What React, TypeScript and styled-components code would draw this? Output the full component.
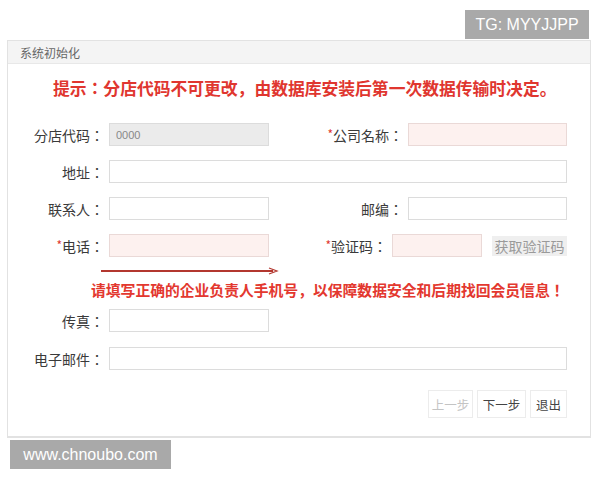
import React from "react";
import styled, { createGlobalStyle } from "styled-components";

const GlobalStyle = createGlobalStyle`
  html, body {
    margin: 0;
    padding: 0;
    background: #ffffff;
  }
  body {
    font-family: "Noto Sans CJK SC", "Noto Sans", sans-serif;
    width: 600px;
    height: 480px;
    overflow: hidden;
  }
`;

// centred full-width punctuation, as in the form's labels and messages
const cjkCentered = `"Noto Sans CJK JP", "Noto Sans CJK SC", sans-serif`;

const Page = styled.div`
  position: relative;
  width: 600px;
  height: 480px;
  padding: 40px 0 0 7px;
  box-sizing: border-box;
`;

const Panel = styled.div`
  width: 584px;
  height: 398px;
  box-sizing: border-box;
  border: 1px solid #e2e2e2;
  border-bottom-width: 2px;
  background: #fff;
  display: flex;
  flex-direction: column;
`;

const Header = styled.div`
  height: 23px;
  box-sizing: border-box;
  background: #f4f4f4;
  border-bottom: 1px solid #e8e8e8;
  padding-left: 12px;
  display: flex;
  align-items: center;
  font-size: 12px;
  color: #666;
`;

const Tip = styled.div`
  height: 48px;
  line-height: 48px;
  padding-left: 45px;
  font-family: ${cjkCentered};
  font-size: 16.8px;
  font-weight: 700;
  color: #e0362f;
  white-space: nowrap;
`;

const Form = styled.div`
  display: flex;
  flex-direction: column;
  padding-top: 11px;
`;

const Row = styled.div<{ $gap?: number }>`
  display: flex;
  align-items: center;
  height: 23px;
  margin-top: ${(p) => p.$gap ?? 14}px;
  &:first-child {
    margin-top: 0;
  }
`;

const Label = styled.label<{ $w: number }>`
  width: ${(p) => p.$w}px;
  margin-right: 5px;
  text-align: right;
  font-family: ${cjkCentered};
  font-size: 14px;
  color: #3a3a3a;
  white-space: nowrap;
`;

const Star = styled.span`
  color: #e0362f;
  font-size: 12px;
  vertical-align: 2px;
`;

type Tone = "plain" | "gray" | "pink";

const Input = styled.input<{ $w: number; $tone?: Tone }>`
  width: ${(p) => p.$w}px;
  height: 23px;
  box-sizing: border-box;
  border: 1px solid ${(p) => (p.$tone === "pink" ? "#ead9d7" : "#dcdcdc")};
  background: ${(p) =>
    p.$tone === "gray" ? "#ebebeb" : p.$tone === "pink" ? "#fdf1ef" : "#fff"};
  padding: 0 6px;
  font-family: "Liberation Sans", "Noto Sans CJK SC", sans-serif;
  font-size: 11px;
  color: #888;
  outline: none;
`;

const CodeButton = styled.button`
  margin-left: 10px;
  width: 75px;
  height: 20px;
  border: none;
  background: #efefef;
  color: #9a9a9a;
  font-family: "Noto Sans CJK SC", sans-serif;
  font-size: 14px;
  padding: 0;
  line-height: 20px;
`;

const Notice = styled.div`
  display: flex;
  flex-direction: column;
  height: 52px;
`;

const Underline = styled.svg`
  display: block;
  margin: 10px 0 0 93px;
`;

const NoticeText = styled.div`
  margin-top: 5px;
  padding-left: 83px;
  font-family: ${cjkCentered};
  font-size: 14.8px;
  line-height: 20px;
  font-weight: 700;
  color: #e3382f;
  white-space: nowrap;
`;

const Actions = styled.div`
  display: flex;
  justify-content: flex-end;
  gap: 4px;
  margin-top: 20px;
  padding-right: 23px;
`;

const StepButton = styled.button<{ $disabled?: boolean; $w: number }>`
  width: ${(p) => p.$w}px;
  height: 28px;
  box-sizing: border-box;
  border: 1px solid #ececec;
  background: #fff;
  color: ${(p) => (p.$disabled ? "#c4c4c4" : "#444")};
  font-family: "Noto Sans CJK SC", sans-serif;
  font-size: 12.5px;
  padding: 0;
`;

const Watermark = styled.div<{ $top: number; $left: number; $w: number }>`
  position: absolute;
  top: ${(p) => p.$top}px;
  left: ${(p) => p.$left}px;
  width: ${(p) => p.$w}px;
  height: 29px;
  background: #a9a9a9;
  color: #fff;
  font-family: "Liberation Sans", Arial, sans-serif;
  font-size: 16px;
  display: flex;
  align-items: center;
  justify-content: center;
`;

export default function App() {
  return (
    <>
      <GlobalStyle />
      <Page>
        <Panel>
          <Header>系统初始化</Header>
          <Tip>提示：分店代码不可更改，由数据库安装后第一次数据传输时决定。</Tip>
          <Form>
            <Row>
              <Label $w={96}>分店代码：</Label>
              <Input $w={160} $tone="gray" defaultValue="0000" readOnly />
              <Label $w={134}>
                <Star>*</Star>公司名称：
              </Label>
              <Input $w={159} $tone="pink" />
            </Row>
            <Row>
              <Label $w={96}>地址：</Label>
              <Input $w={458} />
            </Row>
            <Row>
              <Label $w={96}>联系人：</Label>
              <Input $w={160} />
              <Label $w={134}>邮编：</Label>
              <Input $w={159} />
            </Row>
            <Row>
              <Label $w={96}>
                <Star>*</Star>电话：
              </Label>
              <Input $w={160} $tone="pink" />
              <Label $w={118}>
                <Star>*</Star>验证码：
              </Label>
              <Input $w={90} $tone="pink" />
              <CodeButton>获取验证码</CodeButton>
            </Row>
            <Notice>
              <Underline width="180" height="8" viewBox="0 0 180 8">
                <line x1="0" y1="4" x2="172" y2="4" stroke="#b3372f" strokeWidth="2" />
                <path d="M168 1 L176 4 L168 7" fill="none" stroke="#b3372f" strokeWidth="1.2" />
              </Underline>
              <NoticeText>请填写正确的企业负责人手机号，以保障数据安全和后期找回会员信息！</NoticeText>
            </Notice>
            <Row $gap={0}>
              <Label $w={96}>传真：</Label>
              <Input $w={160} />
            </Row>
            <Row $gap={15}>
              <Label $w={96}>电子邮件：</Label>
              <Input $w={458} />
            </Row>
          </Form>
          <Actions>
            <StepButton $w={45} $disabled>上一步</StepButton>
            <StepButton $w={49}>下一步</StepButton>
            <StepButton $w={37}>退出</StepButton>
          </Actions>
        </Panel>
        <Watermark $top={10} $left={465} $w={124}>TG: MYYJJPP</Watermark>
        <Watermark $top={440} $left={10} $w={161}>www.chnoubo.com</Watermark>
      </Page>
    </>
  );
}
